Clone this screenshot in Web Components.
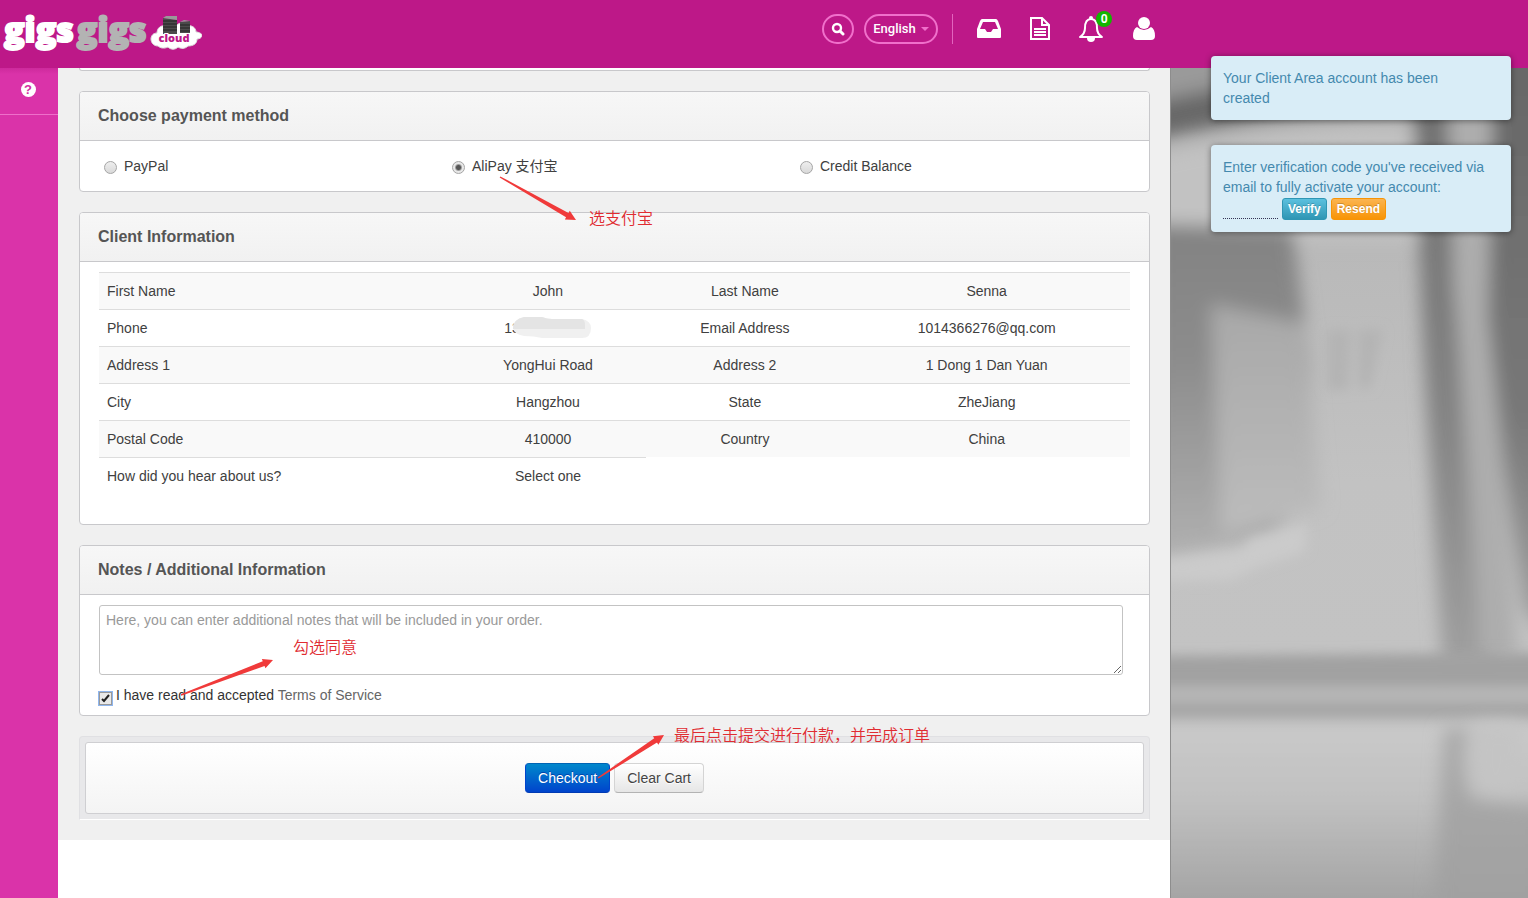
<!DOCTYPE html>
<html lang="en">
<head>
<meta charset="utf-8">
<meta name="viewport" content="width=device-width, initial-scale=1">
<title>Checkout - GigsGigsCloud</title>
<style>
  body { margin: 0; font: 14px/20px "Liberation Sans", Arial, "Noto Sans CJK SC", sans-serif; color: #404040; background: #fff; }
</style>
</head>
<body>
<checkout-page></checkout-page>

<script>
const define = (name, html, setup) => {
  const template = document.createElement('template');
  template.innerHTML = html;
  customElements.define(name, class extends HTMLElement {
    constructor() {
      super();
      this.attachShadow({ mode: 'open' }).append(template.content.cloneNode(true));
    }
    connectedCallback() { if (setup) setup(this, this.shadowRoot); }
  });
};

define('brand-logo', `
<style>
  :host { display: block; }
  a { display: flex; align-items: flex-start; gap: 3px; text-decoration: none; font: 800 34px/34px "Open Sans", sans-serif; color: #fff; }
  span { -webkit-text-stroke: 2px; }
  .second { color: #b3b3b3; }
  svg { display: block; margin-top: 4px; }
</style>
<a href="#" aria-label="gigsgigs cloud"><span>gigs</span><span class="second">gigs</span>
  <svg width="52" height="36" viewBox="0 0 52 36">
    <path d="M8 30C3 30 1 26 1 23c0-3 2-6 6-6 0-5 4-8 8-7 3-4 9-4 12-1 3-3 9-3 11 1 4-1 8 2 8 6 3 0 6 2 6 3 0 3-3 4-5 4 0 5-4 7-9 7-3 3-7 3-10 1-3 3-7 3-10 0-4 2-8 1-10-1z" fill="#fff" stroke="#ddd"/>
    <path d="M13 2l14 2v14H13zM30 6l10-1v12H30z" fill="#4b4b4b"/>
    <path d="M13 5h14M13 8h14M13 11h14M13 14h14M30 9h10M30 12h10M30 15h10" stroke="#222"/>
    <path d="M13 2l3-2h11v4zM30 6l4-2 6 1z" fill="#999"/>
    <text x="24" y="26" text-anchor="middle" font-family="Open Sans, sans-serif" font-size="11" font-weight="800" fill="#bd1888" stroke="#fff" stroke-width="2" paint-order="stroke">cloud</text>
  </svg>
</a>`);

define('site-header', `
<style>
  :host { display: block; background: #bd1888; }
  .bar { box-sizing: border-box; max-width: 1170px; height: 68px; padding: 12px 15px 0 4px; display: flex; justify-content: space-between; align-items: flex-start; }
  nav { display: flex; align-items: center; height: 32px; margin-top: 1px; }
  button { box-sizing: border-box; height: 30px; border: 2px solid #f070cb; border-radius: 15px; background: none; color: #fff; display: flex; align-items: center; justify-content: center; gap: 5px; font: 500 13px/20px Roboto, sans-serif; cursor: pointer; padding: 0; }
  .search { width: 32px; }
  .lang { width: 74px; margin-left: 10px; }
  .caret { border: 4px solid transparent; border-top-color: #f070cb; border-bottom: 0; }
  .rule { width: 1px; height: 30px; margin: 0 24px 0 14px; background: #e264be; }
  nav a { display: block; position: relative; color: #fff; }
  nav svg { display: block; }
  .links { display: flex; align-items: center; justify-content: space-between; width: 178px; }
  .badge { position: absolute; left: 18px; top: -4px; width: 16px; height: 16px; border-radius: 8px; background: #13b500; font: 700 12px/16px Roboto, sans-serif; text-align: center; }
</style>
<header class="bar">
  <brand-logo></brand-logo>
  <nav>
    <button class="search" aria-label="Search"><svg width="14" height="14" viewBox="0 0 14 14" fill="none" stroke="#fff"><circle cx="6" cy="6" r="4" stroke-width="2.4"/><path d="M9 9l3 3" stroke-width="3" stroke-linecap="round"/></svg></button>
    <button class="lang">English <i class="caret"></i></button>
    <span class="rule"></span>
    <div class="links">
      <a href="#" aria-label="Inbox"><svg width="24" height="26" viewBox="0 0 24 26"><path fill="#fff" fill-rule="evenodd" d="M5 3h14q1 0 2 2l3 8v8q0 1-1 1H1q-1 0-1-1v-8l3-8q1-2 2-2zM6 6l-3 7h5l2 3h4l2-3h5l-3-7z"/></svg></a>
      <a href="#" aria-label="Documents"><svg width="20" height="26" viewBox="0 0 20 26" fill="none" stroke="#fff" stroke-width="2"><path d="M1 2h11l7 7v14H1zM12 2v7h7M4 13h12M4 16h12M4 19h12"/></svg></a>
      <a href="#" aria-label="Notifications"><svg width="26" height="28" viewBox="0 0 26 28"><path d="M13 4c5 0 6 4 6 9 0 4 2 7 5 9H2c3-2 5-5 5-9 0-5 1-9 6-9z" fill="none" stroke="#fff" stroke-width="2" stroke-linejoin="round"/><circle cx="13" cy="3" r="2" fill="#fff"/><path d="M9 23h8q0 4-4 4t-4-4z" fill="#fff"/></svg><span class="badge">0</span></a>
      <a href="#" aria-label="Account"><svg width="22" height="26" viewBox="0 0 22 26" fill="#fff"><circle cx="11" cy="7" r="6"/><path d="M4 11q7 6 14 0 4 2 4 9 0 4-4 4H4q-4 0-4-4 0-7 4-9z"/></svg></a>
    </div>
  </nav>
</header>`);

define('side-rail', `
<style>
  :host { display: block; flex: none; width: 58px; background: linear-gradient(#cd2a9c, #da33a9 6px); }
  a { box-sizing: border-box; display: flex; align-items: center; justify-content: center; height: 47px; padding: 0 2px 3px 0; border-bottom: 1px solid #ee6fca; text-decoration: none; }
  span { width: 15px; height: 15px; border-radius: 8px; background: #fff; color: #d42fa2; font: 700 13px/15px "Liberation Sans", sans-serif; text-align: center; }
</style>
<a href="#" aria-label="Help"><span>?</span></a>`);

define('panel-box', `
<style>
  :host { display: block; border: 1px solid #c8c8cb; border-radius: 4px; background: #fff; margin-bottom: 20px; }
  h2 { margin: 0; padding: 14px 18px; font-size: 16px; line-height: 20px; font-weight: 700; color: #555; border-bottom: 1px solid #c8c8cb; background: linear-gradient(#f7f7f7, #f1f1f1); border-radius: 3px 3px 0 0; }
  .body { padding: 10px 19px; }
  :host([heading="Choose payment method"]) .body { padding: 15px 7px 15px 18px; }
</style>
<h2></h2><div class="body"><slot></slot></div>`, (host, root) => {
  root.querySelector('h2').textContent = host.getAttribute('heading');
});

define('payment-methods', `
<style>
  :host { display: grid; grid-template-columns: repeat(3, 1fr); }
  label { display: flex; align-items: center; gap: 7px; padding-left: 6px; }
  input { appearance: none; box-sizing: border-box; width: 13px; height: 13px; margin: 2px 0 0; border: 1px solid #a5a5a5; border-radius: 50%; background: linear-gradient(#eee, #d9d9d9); }
  input:checked { background: radial-gradient(circle, #555 0 2px, #e8e8e8 4px); }
</style>
<label><input type="radio" name="method">PayPal</label>
<label><input type="radio" name="method" checked>AliPay 支付宝</label>
<label><input type="radio" name="method">Credit Balance</label>`);

define('client-table', `
<style>
  :host { display: block; margin-bottom: 20px; }
  table { width: 100%; border-collapse: separate; border-spacing: 0; table-layout: fixed; }
  col:first-child { width: 34%; }
  col { width: 19.1%; }
  col:last-child { width: auto; }
  th, td { height: 20px; padding: 8px; border-top: 1px solid #ddd; font-weight: 400; text-align: center; line-height: 20px; }
  th:first-child { text-align: left; }
  tr:nth-child(odd) > * { background: #f9f9f9; }
  tr:last-child > * { background: none; }
  .phone { display: flex; justify-content: center; height: 20px; }
  svg { display: block; width: 80px; height: 24px; margin: -2px 0 0 -8px; }
</style>
<table><colgroup><col><col><col><col></colgroup><tbody>
<tr><th scope="row">First Name</th><td>John</td><th scope="row">Last Name</th><td>Senna</td></tr>
<tr><th scope="row">Phone</th><td><div class="phone">13<svg viewBox="0 0 80 24"><path d="M12 1h18q5 2 10 2h30q9 2 9 9 0 10-9 10H30q-8-2-18-2-11-2-11-9T12 1z" fill="#f0f0f0"/><path d="M12 1h18q5 2 10 2h30q3 1 3 6v4H1Q1 3 12 1z" fill="#e4e4e4"/></svg></div></td><th scope="row">Email Address</th><td>1014366276@qq.com</td></tr>
<tr><th scope="row">Address 1</th><td>YongHui Road</td><th scope="row">Address 2</th><td>1 Dong 1 Dan Yuan</td></tr>
<tr><th scope="row">City</th><td>Hangzhou</td><th scope="row">State</th><td>ZheJiang</td></tr>
<tr><th scope="row">Postal Code</th><td>410000</td><th scope="row">Country</th><td>China</td></tr>
<tr><th scope="row">How did you hear about us?</th><td>Select one</td></tr>
</tbody></table>`);

define('order-notes', `
<style>
  :host { display: block; }
  textarea { box-sizing: border-box; display: block; width: calc(100% - 7px); height: 70px; margin: 0 0 10px; padding: 4px 6px; border: 1px solid #c3c3c3; border-radius: 3px; font: inherit; color: #555; resize: both; }
  textarea::placeholder { color: #999; }
  .terms { display: flex; align-items: center; gap: 3px; }
  input { appearance: none; box-sizing: border-box; width: 13px; height: 13px; margin: 6px 1px 0 0; border: 1px solid #999; box-shadow: 0 0 0 1px #8fb6ee; background: #e9e9e9; }
  input:checked { background: url("data:image/svg+xml,%3Csvg xmlns='http://www.w3.org/2000/svg' viewBox='0 0 11 11'%3E%3Cpath d='M2 6l2 2 5-6' fill='none' stroke='%23222' stroke-width='2'/%3E%3C/svg%3E") #e9e9e9; }
  label { color: #333; }
  a { color: #666; text-decoration: none; }
</style>
<textarea aria-label="Notes" placeholder="Here, you can enter additional notes that will be included in your order."></textarea>
<div class="terms"><input type="checkbox" id="tos" checked><div><label for="tos">I have read and accepted</label> <a href="#">Terms of Service</a></div></div>`);

define('form-actions', `
<style>
  :host { display: block; padding: 5px; border: 1px solid #e0e0e3; border-bottom-color: #fff; border-radius: 4px 4px 0 0; background: #e8e8ea; }
  div { display: flex; justify-content: center; gap: 4px; padding: 20px 0; border: 1px solid #cfcfd2; border-radius: 3px; background: linear-gradient(#fff, #f4f4f4); }
  button { height: 30px; padding: 0 12px; font: inherit; border-radius: 4px; border: 1px solid #d4d4d4; border-bottom-color: #b3b3b3; color: #444; background: linear-gradient(#fff, #e6e6e6); text-shadow: 0 1px 1px #fff; cursor: pointer; }
  .primary { color: #fff; border-color: #0064b5 #0044cc #003ab3; background: linear-gradient(#0088cc, #0044cc); text-shadow: 0 -1px 0 #0044aa; }
</style>
<div><button class="primary">Checkout</button><button>Clear Cart</button></div>`);

/* A hand-drawn tutorial mark: a tapered arrow with a caption, laid over the page */
define('hint-arrow', `
<style>
  :host { position: absolute; pointer-events: none; color: #e02c32; font: 350 16px/20px "Noto Sans CJK SC", sans-serif; white-space: nowrap; }
  div { display: flex; gap: var(--gap, 10px); }
  svg { display: block; overflow: visible; }
</style>
<div><svg fill="#f03a3a"><path/></svg><span><slot></slot></span></div>`, (host, root) => {
  const [w, h] = host.getAttribute('size').split(' ').map(Number);
  const svg = root.querySelector('svg');
  svg.setAttribute('width', w);
  svg.setAttribute('height', h);
  const down = host.getAttribute('dir') === 'down';
  const y0 = down ? 0 : h, y1 = down ? h : 0;
  const len = Math.hypot(w, h), ux = w / len, uy = (y1 - y0) / len;
  const at = (back, side) => (w - ux * back - uy * side) + ' ' + (y1 - uy * back + ux * side);
  root.querySelector('path').setAttribute('d', `M${at(len, -0.7)}L${at(10, -2.5)}L${at(10, -5)}L${w} ${y1}L${at(10, 5)}L${at(10, 2.5)}L${at(len, 0.7)}z`);
  root.querySelector('span').style.marginTop = host.getAttribute('drop') + 'px';
});

define('photo-backdrop', `
<style>
  :host { display: block; flex: 1; min-width: 0; position: relative; overflow: hidden; background: #b4b4b4; border-left: 1px solid #8d8d8d; }
  svg { position: absolute; width: 100%; height: 100%; }
</style>
<svg viewBox="0 0 358 830" preserveAspectRatio="none" aria-hidden="true">
  <defs>
    <filter id="s" x="-30%" y="-30%" width="160%" height="160%"><feGaussianBlur stdDeviation="9"/></filter>
    <filter id="t" x="-30%" y="-30%" width="160%" height="160%"><feGaussianBlur stdDeviation="6"/></filter>
    <linearGradient id="base" x2="0" y2="1"><stop offset="0" stop-color="#b2b2b2"/><stop offset=".5" stop-color="#c2c2c2"/><stop offset=".7" stop-color="#c3c3c3"/><stop offset="1" stop-color="#a5a5a5"/></linearGradient>
    <linearGradient id="left" x2="0" y2="1"><stop offset="0" stop-color="#828282"/><stop offset=".4" stop-color="#8c8c8c"/><stop offset="1" stop-color="#b0b0b0"/></linearGradient>
    <linearGradient id="mid" x2="0" y2="1"><stop offset="0" stop-color="#a8a8a8"/><stop offset="1" stop-color="#bcbcbc"/></linearGradient>
    <linearGradient id="edge" x2="0" y2="1"><stop offset="0" stop-color="#666"/><stop offset=".6" stop-color="#787878"/><stop offset="1" stop-color="#a4a4a4"/></linearGradient>
    <linearGradient id="col" x2="0" y2="1"><stop offset="0" stop-color="#6c6c6c"/><stop offset=".6" stop-color="#848484"/><stop offset="1" stop-color="#a0a0a0"/></linearGradient>
    <linearGradient id="floor" x2="0" y2="1"><stop offset="0" stop-color="#cacaca"/><stop offset=".4" stop-color="#c0c0c0"/><stop offset="1" stop-color="#9f9f9f"/></linearGradient>
    <linearGradient id="post" x2="0" y2="1"><stop offset="0" stop-color="#aaa"/><stop offset="1" stop-color="#a0a0a0"/></linearGradient>
  </defs>
  <rect width="358" height="830" fill="url(#base)"/>
  <g filter="url(#s)">
    <path d="M-20-20H260V40Q100 44-20 72z" fill="#686868"/>
    <path d="M-20-20H110L50 20-20 34z" fill="#9a9a9a"/>
    <path d="M-20 88Q120 54 250 60V172H-20z" fill="#c2c2c2"/>
    <path d="M-20 156L122 160 130 220 140 300 140 420 100 470-20 490z" fill="url(#left)"/>
    <path d="M40 236L134 256 150 440 50 465z" fill="url(#mid)"/>
    <path d="M240-20H276L284 220 300 400 324 600H272L254 300z" fill="url(#col)"/>
    <path d="M276 20H326L318 200 348 590H310L287 250z" fill="#adadad"/>
    <path d="M324-20H390V590L354 540 334 400 318 250z" fill="url(#edge)"/>
  </g>
  <g filter="url(#t)">
    <path d="M-20 494L70 482 80 470 136 456 134 484 90 498 60 512-20 514z" fill="#cbcbcb"/>
    <path d="M156 262h24l-2 60h-22zM188 262h24l-12 58h-12z" fill="#b4b4b4"/>
    <path d="M-20 588L380 585V618H-20z" fill="#a1a1a1"/>
    <path d="M-20 619H380V635H-20z" fill="#b6b6b6"/>
    <path d="M-20 636H380V648H-20z" fill="#a2a2a2"/>
    <path d="M-20 656H380V850H-20z" fill="url(#floor)"/>
  </g>
  <g filter="url(#s)">
    <path d="M274 660H300Q288 690 300 730L380 740V850H262z" fill="url(#post)"/>
    <path d="M306 655H350Q358 700 340 730H310Q294 700 306 655z" fill="#c4c4c4"/>
  </g>
</svg>`);

define('toast-box', `
<style>
  :host { box-sizing: border-box; display: block; padding: 12px 24px 12px 12px; border-radius: 4px; background: #d9edf7; color: #4489ae; box-shadow: 0 1px 6px rgba(0,0,0,.45); }
</style>
<slot></slot>`);

define('verify-form', `
<style>
  :host { display: flex; gap: 4px; height: 22px; margin-top: 1px; }
  input { box-sizing: border-box; width: 55px; height: 21px; padding: 0; border: 0; border-bottom: 1px dotted #335; background: none; }
  button { height: 22px; padding: 0 5px; border: 1px solid #2f96b4; border-radius: 3px; color: #fff; font: 700 12px/20px "Liberation Sans", sans-serif; text-shadow: 0 -1px 0 rgba(0,0,0,.2); background: linear-gradient(#5bc0de, #2f96b4); cursor: pointer; }
  .resend { border-color: #f89406; background: linear-gradient(#fbb450, #f89406); }
</style>
<input aria-label="Verification code"><button>Verify</button><button class="resend">Resend</button>`);

define('toast-stack', `
<style>
  :host { position: absolute; top: 56px; right: 17px; width: 300px; display: grid; gap: 25px; }
</style>
<toast-box>Your Client Area account has been created</toast-box>
<toast-box>Enter verification code you've received via email to fully activate your account:<verify-form></verify-form></toast-box>`);

define('checkout-page', `
<style>
  :host { display: flex; flex-direction: column; min-height: 100vh; position: relative; }
  .row { flex: 1; display: flex; }
  .container { flex: 0 1 1170px; display: flex; min-width: 0; }
  main { flex: 1; min-width: 0; position: relative; }
  .content { padding: 0 20px 20px 21px; background: #f0f0f0; }
  .tail { height: 2px; border: 1px solid #c8c8cb; border-top: 0; border-radius: 0 0 4px 4px; background: #fff; margin-bottom: 20px; }
  .pay { left: 442px; top: 109px; --gap: 13px; }
  .agree { left: 123px; top: 592px; --gap: 20px; }
  .submit { left: 540px; top: 667px; }
</style>
<site-header></site-header>
<div class="row">
  <div class="container">
    <side-rail></side-rail>
    <main>
      <div class="content">
        <div class="tail"></div>
        <panel-box heading="Choose payment method"><payment-methods></payment-methods></panel-box>
        <panel-box heading="Client Information"><client-table></client-table></panel-box>
        <panel-box heading="Notes / Additional Information"><order-notes></order-notes></panel-box>
        <form-actions></form-actions>
      </div>
      <hint-arrow class="pay" dir="down" size="76 43" drop="30">选支付宝</hint-arrow>
      <hint-arrow class="agree" dir="up" size="92 35" drop="-24">勾选同意</hint-arrow>
      <hint-arrow class="submit" dir="up" size="66 43" drop="-11">最后点击提交进行付款，并完成订单</hint-arrow>
    </main>
  </div>
  <photo-backdrop></photo-backdrop>
</div>
<toast-stack></toast-stack>`);
</script>
</body>
</html>
